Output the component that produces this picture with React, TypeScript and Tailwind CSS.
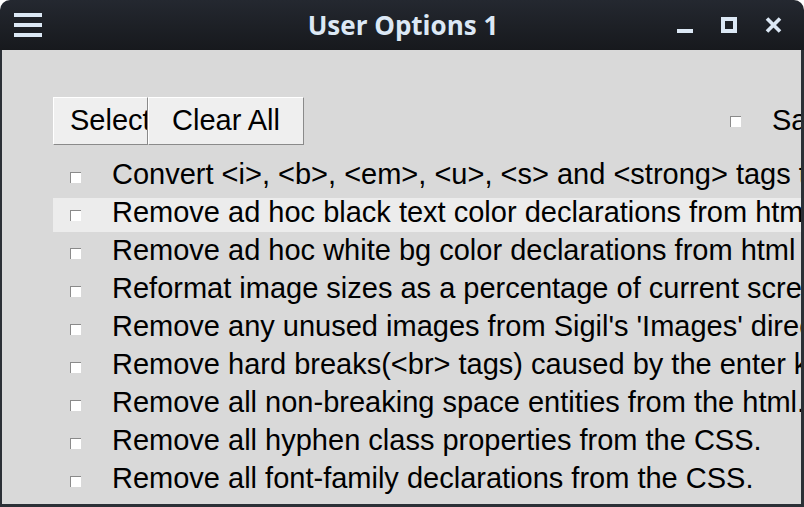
import React from "react";

const rows = [
  "Convert <i>, <b>, <em>, <u>, <s> and <strong> tags to their CSS equivalents.",
  "Remove ad hoc black text color declarations from html files.",
  "Remove ad hoc white bg color declarations from html files.",
  "Reformat image sizes as a percentage of current screen size.",
  "Remove any unused images from Sigil's 'Images' directory.",
  "Remove hard breaks(<br> tags) caused by the enter key.",
  "Remove all non-breaking space entities from the html.",
  "Remove all hyphen class properties from the CSS.",
  "Remove all font-family declarations from the CSS.",
  "Remove all empty paragraphs and divs from the html files.",
];

function Box() {
  return (
    <span className="block w-[11px] h-[11px] shrink-0 bg-white border-t border-l border-[#8a8a8a]" />
  );
}

export default function App() {
  return (
    <div className="w-[804px] h-[507px] bg-white overflow-hidden">
      <div className="w-[804px] h-[507px] flex flex-col rounded-t-[10px] overflow-hidden">
        <div className="h-[50px] shrink-0 flex items-center relative bg-gradient-to-b from-[#242830] to-[#17191d]">
          <div className="ml-[14px] flex flex-col gap-[6px]">
            <span className="block w-[28px] h-[4px] bg-[#dce8f5]" />
            <span className="block w-[28px] h-[4px] bg-[#dce8f5]" />
            <span className="block w-[28px] h-[4px] bg-[#dce8f5]" />
          </div>
          <div
            className="absolute left-0 right-0 top-0 h-[50px] flex items-center justify-center text-[26px] font-bold text-[#dce8f5]"
            style={{ fontFamily: '"Open Sans", sans-serif' }}
          >
            <span className="ml-[2px] mt-[1px]">User Options 1</span>
          </div>
          <div className="ml-auto mr-[22px] flex items-center gap-[28px] relative">
            <span className="block w-[16px] h-[16px] relative">
              <span className="absolute left-0 bottom-0 w-[16px] h-[4px] bg-[#dce8f5]" />
            </span>
            <span className="block w-[16px] h-[16px] border-[4px] border-[#dce8f5]" />
            <svg width="17" height="16" viewBox="0 0 17 16" className="block">
              <path d="M2 1.5 L15 14.5 M15 1.5 L2 14.5" stroke="#dce8f5" strokeWidth="3.6" />
            </svg>
          </div>
        </div>
        <div
          className="flex-1 min-h-0 bg-[#d9d9d9] border-l-[2px] border-r-[3px] border-b-[3px] border-[#2b3036] overflow-hidden"
          style={{ fontFamily: '"Liberation Sans", Arial, sans-serif' }}
        >
          <div className="pt-[47px] pl-[51px] flex items-center">
            <div className="flex h-[48px]">
              <div className="w-[95px] h-[48px] overflow-hidden bg-[#efefef] border-t border-l border-white border-b border-r border-b-[#8a8a8a] border-r-[#8a8a8a] flex items-center pl-[16px] text-[29px] text-black whitespace-nowrap">
                Select All
              </div>
              <div className="w-[156px] h-[48px] bg-[#efefef] border-t border-l border-white border-b border-r border-b-[#8a8a8a] border-r-[#8a8a8a] flex items-center justify-center text-[29px] text-black whitespace-nowrap">
                Clear All
              </div>
            </div>
            <div className="ml-[426px] flex items-center whitespace-nowrap">
              <Box />
              <span className="ml-[31px] text-[29px] text-black">Save Settings</span>
            </div>
          </div>
          <div className="mt-[13px] flex flex-col">
            {rows.map((r, i) => (
              <div key={i} className="h-[38px] py-[2px] pl-[51px]">
                <div
                  className={
                    "h-[34px] flex items-center whitespace-nowrap " +
                    (i === 1 ? "bg-[#ececec]" : "")
                  }
                >
                  <span className="ml-[17px]">
                    <Box />
                  </span>
                  <span className="ml-[31px] -mt-[4px] text-[29px] text-black">{r}</span>
                </div>
              </div>
            ))}
          </div>
        </div>
      </div>
    </div>
  );
}
